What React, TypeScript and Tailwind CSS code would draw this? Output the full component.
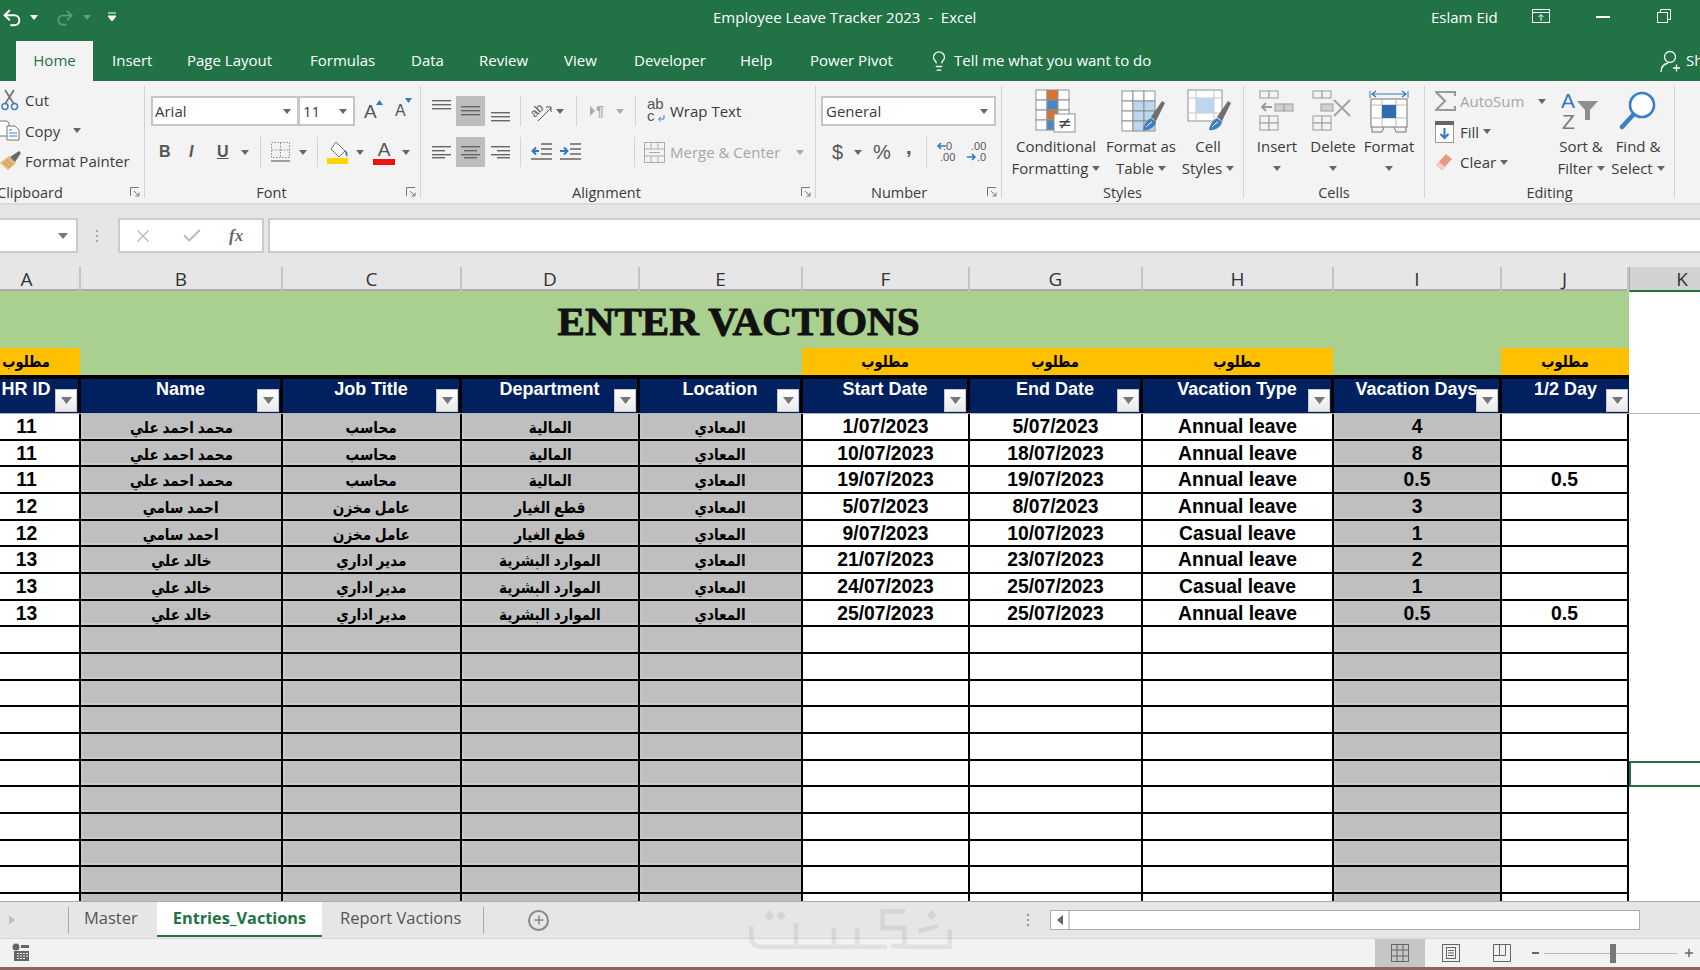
import { Check, Lightbulb, Plus, Redo2, Undo2, X } from "lucide-react";

const Caret = ({ className = "" }: { className?: string }) => (
  <svg width="8" height="5" viewBox="0 0 8 5" className={`shrink-0 ${className}`}>
    <path d="M0 0h8L4 5z" fill="#666" />
  </svg>
);

const Sep = ({ className = "" }: { className?: string }) => <div className={`h-[30px] w-px shrink-0 bg-[#d4d4d4] ${className}`} />;

const Lines = ({ rows, w = 19, h = 14 }: { rows: number[][]; w?: number; h?: number }) => (
  <svg width={w} height={h} viewBox={`0 0 ${w} ${h}`} className="shrink-0">
    {rows.map((r, i) => (
      <rect key={i} x={r[0]} y={r[2]} width={r[1] - r[0]} height="1.4" fill="#666" />
    ))}
  </svg>
);

const AlignBox = ({ children, active }: { children: React.ReactNode; active?: boolean }) => (
  <div className={`flex h-[30px] w-[29px] shrink-0 items-center justify-center ${active ? "bg-[#bdbdbd]" : ""}`}>{children}</div>
);

const Launcher = () => (
  <svg width="10" height="10" viewBox="0 0 10 10" className="absolute bottom-[1px] right-[4px]">
    <path d="M.5 9V.5H9M4 4l5 5M9 5.5V9H5.5" fill="none" stroke="#777" />
  </svg>
);

const Group = ({ label, className, labelClass = "justify-center", launcher, children }: { label: string; className: string; labelClass?: string; launcher?: boolean; children: React.ReactNode }) => (
  <div className={`relative flex h-[112px] shrink-0 flex-col border-r border-[#d2d2d2] ${className}`}>
    <div className="h-[100px] shrink-0">{children}</div>
    <div className={`flex h-[14px] items-center text-[14.5px] leading-none text-[#3b3b3b] ${labelClass}`}>{label}</div>
    {launcher && <Launcher />}
  </div>
);

const SmallBtn = ({ icon, label, caret, dim, caretClass }: { icon: React.ReactNode; label: string; caret?: boolean; dim?: boolean; caretClass?: string }) => (
  <div className="flex h-[30.5px] items-center">
    <div className="flex w-[25px] shrink-0 items-center">{icon}</div>
    <span className={`text-[15px] ${dim ? "text-[#a6a6a6]" : "text-[#3b3b3b]"}`}>{label}</span>
    {caret && <Caret className={caretClass} />}
  </div>
);

const BigBtn = ({ icon, lines, className, caretBelow }: { icon: React.ReactNode; lines: string[]; className: string; caretBelow?: boolean }) => (
  <div className={`flex shrink-0 flex-col items-center ${className}`}>
    <div className="flex h-[49px] items-center justify-center">{icon}</div>
    <span className="whitespace-nowrap text-[15px] leading-[22px] text-[#3b3b3b]">{lines[0]}</span>
    {caretBelow ? (
      <div className="flex h-[22px] items-center"><Caret /></div>
    ) : (
      <span className="flex items-center gap-[4px] whitespace-nowrap text-[15px] leading-[22px] text-[#3b3b3b]">
        {lines[1]}
        <Caret />
      </span>
    )}
  </div>
);

const CellGrid = ({ x, y, fill }: { x: number; y: number; fill: (c: number, r: number) => string }) => (
  <g>
    {[0, 1, 2, 3].map((r) =>
      [0, 1, 2].map((c) => <rect key={`${r}-${c}`} x={x + c * 11} y={y + r * 10} width="11" height="10" fill={fill(c, r)} stroke="#8f8f8f" />)
    )}
  </g>
);

const Brush = () => (
  <g>
    <path d="M30 28L41 12l3 2-9 18z" fill="#6f6f6f" />
    <path d="M22 41c1-6 4-10 8-12l5 4c-1 5-7 9-13 8z" fill="#3f7fc1" />
    <path d="M25 38c2-2 4-4 6-5" stroke="#fff" fill="none" />
  </g>
);

const CondIcon = () => (
  <svg width="42" height="44" viewBox="0 0 42 44">
    <CellGrid x={1} y={1} fill={(c, r) => (c === 1 && r === 0 ? "#d9732c" : c === 1 && r === 1 ? "#4a86c5" : c === 1 && r === 2 ? "#d9732c" : c === 1 && r === 3 ? "#4a86c5" : "#fff")} />
    <rect x="19" y="25" width="21" height="18" fill="#fff" stroke="#8f8f8f" />
    <text x="29.5" y="40" textAnchor="middle" fontSize="17" fontFamily="DejaVu Sans" fill="#444">≠</text>
  </svg>
);

const TableIcon = () => (
  <svg width="46" height="44" viewBox="0 0 46 44" className="ml-[6px]">
    <CellGrid x={1} y={2} fill={(c, r) => (r === 0 ? "#fff" : c === 0 ? "#fff" : "#bcd6ef")} />
    <Brush />
  </svg>
);

const StylesIcon = () => (
  <svg width="46" height="44" viewBox="0 0 46 44" className="ml-[4px]">
    <rect x="1" y="1" width="34" height="31" fill="#fff" stroke="#8f8f8f" />
    <path d="M1 9h34M1 24h34M9 1v31M27 1v31" stroke="#c4c4c4" />
    <rect x="9" y="9" width="18" height="15" fill="#bcd6ef" />
    <Brush />
  </svg>
);

const InsertIcon = () => (
  <svg width="36" height="42" viewBox="0 0 36 42" fill="#f3f3f3" stroke="#a8a8a8" strokeWidth="1.2">
    <rect x="1" y="1" width="9" height="7" /><rect x="10" y="1" width="9" height="7" />
    <rect x="16" y="14" width="9" height="7" fill="#cfcfcf" /><rect x="25" y="14" width="9" height="7" fill="#cfcfcf" />
    <rect x="1" y="26" width="9" height="7" /><rect x="10" y="26" width="9" height="7" /><rect x="1" y="33" width="9" height="7" /><rect x="10" y="33" width="9" height="7" />
    <path d="M13 17H3m4-4l-4 4 4 4" fill="none" stroke="#9a9a9a" strokeWidth="1.8" />
  </svg>
);

const DeleteIcon = () => (
  <svg width="42" height="42" viewBox="0 0 42 42" fill="#f3f3f3" stroke="#a8a8a8" strokeWidth="1.2">
    <rect x="1" y="1" width="9" height="7" /><rect x="10" y="1" width="9" height="7" />
    <rect x="9" y="14" width="12" height="7" fill="#cfcfcf" />
    <rect x="1" y="26" width="9" height="7" /><rect x="10" y="26" width="9" height="7" /><rect x="1" y="33" width="9" height="7" /><rect x="10" y="33" width="9" height="7" />
    <path d="M22 10l16 16M38 10L22 26" fill="none" stroke="#a3a3a3" strokeWidth="2" />
  </svg>
);

const FormatIcon = () => (
  <svg width="40" height="44" viewBox="0 0 40 44" fill="#fff" stroke="#777">
    <path d="M1 2v7M39 2v7" stroke="#2f78c4" />
    <path d="M3 5h34M7 2L3 5l4 3M33 2l4 3-4 3" fill="none" stroke="#2f78c4" strokeWidth="1.2" />
    <rect x="2" y="10" width="36" height="28" />
    <path d="M2 16h36M2 29h36M13 10v28M27 10v28" stroke="#b8b8b8" />
    <rect x="13" y="16" width="14" height="13" fill="#2f6db0" stroke="none" />
    <path d="M3 38v5h10l2-5M25 38l2 5h10v-5" fill="none" />
  </svg>
);

const Filter = () => (
  <div className="absolute bottom-[1px] right-[1px] flex h-[23px] w-[22px] items-center justify-center border border-[#c8c8c8] bg-gradient-to-b from-white to-[#e9e9e9]">
    <svg width="11" height="7" viewBox="0 0 11 7"><path d="M0 0h11L5.5 7z" fill="#777" /></svg>
  </div>
);

const gridCols = "grid grid-cols-[107px_202px_179px_178px_163px_167px_173px_191px_168px_127px_71px]";
const columns = ["A", "B", "C", "D", "E", "F", "G", "H", "I", "J", "K"];
const headers = ["HR ID", "Name", "Job Title", "Department", "Location", "Start Date", "End Date", "Vacation Type", "Vacation Days", "1/2 Day"];
const greyCols = [1, 2, 3, 4, 8];

const rows = [
  ["11", "محمد احمد علي", "محاسب", "المالية", "المعادي", "1/07/2023", "5/07/2023", "Annual leave", "4", ""],
  ["11", "محمد احمد علي", "محاسب", "المالية", "المعادي", "10/07/2023", "18/07/2023", "Annual leave", "8", ""],
  ["11", "محمد احمد علي", "محاسب", "المالية", "المعادي", "19/07/2023", "19/07/2023", "Annual leave", "0.5", "0.5"],
  ["12", "احمد سامي", "عامل مخزن", "قطع الغيار", "المعادي", "5/07/2023", "8/07/2023", "Annual leave", "3", ""],
  ["12", "احمد سامي", "عامل مخزن", "قطع الغيار", "المعادي", "9/07/2023", "10/07/2023", "Casual leave", "1", ""],
  ["13", "خالد علي", "مدير اداري", "الموارد البشرية", "المعادي", "21/07/2023", "23/07/2023", "Annual leave", "2", ""],
  ["13", "خالد علي", "مدير اداري", "الموارد البشرية", "المعادي", "24/07/2023", "25/07/2023", "Casual leave", "1", ""],
  ["13", "خالد علي", "مدير اداري", "الموارد البشرية", "المعادي", "25/07/2023", "25/07/2023", "Annual leave", "0.5", "0.5"],
  ...Array.from({ length: 11 }, () => Array(10).fill("")),
];

const required = "مطلوب";

export default function App() {
  return (
    <div className="relative flex h-[970px] w-[1700px] flex-col overflow-hidden bg-white font-['Open_Sans',sans-serif]">
      {/* title bar */}
      <div className="relative flex h-[41px] shrink-0 items-center bg-[#217346] text-white">
        <Undo2 size={22} strokeWidth={2.2} className="mb-[6px] ml-[1px] text-white" />
        <Caret className="mb-[6px] ml-[7px] [&>path]:fill-white" />
        <Redo2 size={20} strokeWidth={2} className="mb-[6px] ml-[17px] text-[#5f9f7d]" />
        <Caret className="mb-[6px] ml-[8px] [&>path]:fill-[#5f9f7d]" />
        <svg width="10" height="11" viewBox="0 0 10 11" className="mb-[6px] ml-[16px]"><path d="M1 1h8M1 4h8L5 9z" fill="#fff" stroke="#fff" /></svg>
        <span className="absolute left-[713px] top-[6px] whitespace-nowrap text-[15px] leading-[22px]">Employee Leave Tracker 2023&nbsp; -&nbsp; Excel</span>
        <span className="absolute left-[1431px] top-[6px] text-[15px] leading-[22px]">Eslam Eid</span>
        <svg width="18" height="15" viewBox="0 0 18 15" className="absolute left-[1532px] top-[9px]" fill="none" stroke="#fff"><rect x=".5" y=".5" width="17" height="13" /><path d="M1 3.5h16M9 12V6M6.5 8L9 5.500l2.500 2.500" /></svg>
        <div className="absolute left-[1596px] top-[16px] h-[2px] w-[14px] bg-white" />
        <svg width="14" height="14" viewBox="0 0 14 14" className="absolute left-[1657px] top-[9px]" fill="none" stroke="#fff"><rect x=".5" y="3.500" width="10" height="10" /><path d="M3.500 3V.5h10v10H11" /></svg>
      </div>

      {/* tabs */}
      <div className="relative flex h-[40px] shrink-0 items-center bg-[#217346] text-[15px] text-white [&>span]:pb-[2px]">
        <div className="ml-[16px] flex h-full w-[77px] items-center justify-center bg-[#f3f3f3] pb-[2px] text-[#217346]">Home</div>
        <span className="ml-[19px] w-[38px]">Insert</span>
        <span className="ml-[37px] w-[86px] whitespace-nowrap">Page Layout</span>
        <span className="ml-[37px] w-[65px]">Formulas</span>
        <span className="ml-[36px] w-[32px]">Data</span>
        <span className="ml-[36px] w-[49px]">Review</span>
        <span className="ml-[36px] w-[33px]">View</span>
        <span className="ml-[37px] w-[70px]">Developer</span>
        <span className="ml-[36px] w-[33px]">Help</span>
        <span className="ml-[37px] w-[83px] whitespace-nowrap">Power Pivot</span>
        <Lightbulb size={22} strokeWidth={1.4} className="ml-[35px]" />
        <span className="ml-[4px] whitespace-nowrap">Tell me what you want to do</span>
        <svg width="21" height="23" viewBox="0 0 21 23" fill="none" stroke="#fff" strokeWidth="1.3" className="absolute left-[1660px] top-[9px]">
          <circle cx="10" cy="7" r="5.500" /><path d="M1 22c0-5 3-8 7-9M13 18h7M16.500 14.500v7" />
        </svg>
        <span className="absolute left-[1686px] top-[8px]">Share</span>
      </div>

      {/* ribbon */}
      <div className="flex h-[124px] shrink-0 items-start border-b-2 border-[#dadada] bg-[#f3f3f3] pt-[5px]">
        <Group label="Clipboard" className="w-[145px]" labelClass="pl-0 -ml-[3px]" launcher>
          <div className="-mt-px">
            <SmallBtn label="Cut" icon={
              <svg width="20" height="22" viewBox="0 0 20 22" fill="none"><path d="M5 1l9 14M14 1L5 15" stroke="#6d6d6d" strokeWidth="1.6" /><circle cx="5" cy="17.500" r="3" stroke="#3f7fc1" strokeWidth="1.5" /><circle cx="14.500" cy="17.500" r="3" stroke="#3f7fc1" strokeWidth="1.5" /></svg>
            } />
            <SmallBtn label="Copy" caret caretClass="ml-[13px]" icon={
              <svg width="20" height="21" viewBox="0 0 20 21"><path d="M-1 1h8l2 2v13H-1z" fill="#fff" stroke="#777" /><path d="M7 6h8l4 4v10H7z" fill="#fff" stroke="#777" /><path d="M9 10h3M9 13h8M9 16h8" stroke="#3f7fc1" /></svg>
            } />
            <SmallBtn label="Format Painter" icon={
              <svg width="22" height="22" viewBox="0 0 22 22"><path d="M0 13l9-7 7 7-8 7z" fill="#e3b877" /><path d="M10 7l9-6 2 2-6 9z" fill="#6a6a6a" /><path d="M4 12l6 6M7 10l5 6" stroke="#c68f45" /></svg>
            } />
          </div>
        </Group>

        <Group label="Font" className="w-[276px]" labelClass="justify-center pr-[22px]" launcher>
          <div className="flex flex-col gap-[11px] pl-[6px] pt-[10px]">
            <div className="flex h-[30px] items-center">
              <div className="flex h-full w-[148px] items-center justify-between border-2 border-[#c6c6c6] bg-white pl-[2px] pr-[6px] text-[15px] text-[#3b3b3b]">Arial<Caret /></div>
              <div className="-ml-px flex h-full w-[57px] items-center justify-between border-2 border-[#c6c6c6] bg-white pl-[3px] pr-[6px] text-[15px] text-[#3b3b3b]">11<Caret /></div>
              <div className="relative ml-[9px] w-[18px] font-['Liberation_Sans'] text-[19px] leading-none text-[#555]">A<svg width="7" height="5" viewBox="0 0 7 5" className="absolute -top-[2px] left-[12px]"><path d="M0 5h7L3.500 0z" fill="#2f78c4" /></svg></div>
              <div className="relative ml-[13px] w-[15px] font-['Liberation_Sans'] text-[16px] leading-none text-[#555]">A<svg width="7" height="5" viewBox="0 0 7 5" className="absolute -top-[5px] left-[10px]"><path d="M0 0h7L3.500 5z" fill="#2f78c4" /></svg></div>
            </div>
            <div className="flex h-[30px] items-center font-['Liberation_Sans'] text-[16px] text-[#555]">
              <span className="ml-[8px] w-[12px] font-bold">B</span>
              <span className="ml-[18px] w-[10px] font-bold italic">I</span>
              <span className="ml-[18px] w-[13px] font-bold underline">U</span>
              <Caret className="ml-[11px]" />
              <Sep className="ml-[11px]" />
              <svg width="19" height="20" viewBox="0 0 19 20" className="ml-[10px] shrink-0" fill="none" stroke="#8a8a8a" strokeDasharray="1.500 1.500"><rect x=".5" y=".5" width="18" height="15" /><path d="M9.500 1v14M1 8h17" /><path d="M0 19h19" strokeDasharray="none" strokeWidth="1.600" /></svg>
              <Caret className="ml-[9px]" />
              <Sep className="ml-[10px]" />
              <svg width="22" height="23" viewBox="0 0 22 23" className="ml-[9px] shrink-0"><path d="M9 1l9 9-6 6-8-8z" fill="#fff" stroke="#777" /><path d="M18 9c3 2 3 5 2 7-1-2-2-3-2-7z" fill="#3f7fc1" /><rect y="17" width="21" height="6" fill="#ffd500" /></svg>
              <Caret className="ml-[7px]" />
              <div className="ml-[9px] flex w-[22px] flex-col items-center"><span className="text-[19px] leading-[19px]">A</span><div className="h-[6px] w-full bg-[#ee1111]" /></div>
              <Caret className="ml-[7px]" />
            </div>
          </div>
        </Group>

        <Group label="Alignment" className="w-[395px]" labelClass="pl-[151px]" launcher>
          <div className="flex flex-col gap-[11px] pl-[11px] pt-[10px]">
            <div className="flex h-[30px] items-center">
              <div className="mb-[10px]"><Lines rows={[[0, 19, 1], [0, 19, 5], [0, 19, 9]]} /></div>
              <div className="ml-[5px]"><AlignBox active><Lines rows={[[0, 19, 2], [0, 19, 6], [0, 19, 10]]} /></AlignBox></div>
              <div className="ml-[6px] mt-[10px]"><Lines rows={[[0, 19, 3], [0, 19, 7], [0, 19, 11]]} /></div>
              <Sep className="ml-[10px]" />
              <svg width="22" height="22" viewBox="0 0 22 22" className="ml-[10px] shrink-0 overflow-visible"><text x="0" y="13" transform="rotate(-45 8 11)" fontFamily="Liberation Sans" fontSize="12" fill="#555">ab</text><path d="M7 21L20 8M15 7h5v5" stroke="#555" fill="none" /></svg>
              <Caret className="ml-[3px]" />
              <Sep className="ml-[12px]" />
              <svg width="17" height="14" viewBox="0 0 17 14" className="ml-[13px] shrink-0"><path d="M0 2l5 5-5 5z" fill="#aaa" /><text x="6" y="12" fontFamily="Liberation Sans" fontWeight="bold" fontSize="14" fill="#aaa">¶</text></svg>
              <Caret className="ml-[9px] [&>path]:fill-[#aaa]" />
              <Sep className="ml-[11px]" />
              <div className="relative ml-[11px] h-[26px] w-[18px] shrink-0 font-['Liberation_Sans'] text-[15px] leading-[12px] text-[#555]">
                <span className="block">ab</span>
                <span className="block">c</span>
                <svg width="8" height="8" viewBox="0 0 8 8" className="absolute bottom-[1px] right-0" fill="none" stroke="#3f7fc1"><path d="M7 0v4H2M4 2L1.500 4 4 6.500" /></svg>
              </div>
              <span className="ml-[5px] whitespace-nowrap text-[15px] text-[#3b3b3b]">Wrap Text</span>
            </div>
            <div className="flex h-[30px] items-center">
              <Lines rows={[[0, 19, 1], [0, 13, 5], [0, 19, 9], [0, 13, 12]]} />
              <div className="ml-[5px]"><AlignBox active><Lines rows={[[0, 19, 1], [3, 16, 5], [0, 19, 9], [3, 16, 12]]} /></AlignBox></div>
              <div className="ml-[6px]"><Lines rows={[[0, 19, 1], [6, 19, 5], [0, 19, 9], [6, 19, 12]]} /></div>
              <Sep className="ml-[10px]" />
              <svg width="21" height="18" viewBox="0 0 21 18" className="ml-[10px] shrink-0"><path d="M10 1h11M10 6h11M10 11h11M0 16h21" stroke="#666" strokeWidth="1.300" /><path d="M8 8H2M5 4.500L1.500 8 5 11.500" fill="none" stroke="#2f78c4" strokeWidth="2" /></svg>
              <svg width="21" height="18" viewBox="0 0 21 18" className="ml-[8px] shrink-0"><path d="M10 1h11M10 6h11M10 11h11M0 16h21" stroke="#666" strokeWidth="1.300" /><path d="M0 8h7M4 4.500L7.500 8 4 11.500" fill="none" stroke="#2f78c4" strokeWidth="2" /></svg>
              <Sep className="ml-[53px]" />
              <svg width="21" height="21" viewBox="0 0 21 21" className="ml-[9px] shrink-0" fill="none" stroke="#ababab"><rect x=".5" y=".5" width="20" height="20" /><path d="M1 7h19M1 14h19M7 1v6M14 1v6M7 14v6M14 14v6M5 10.500h11" /></svg>
              <span className="ml-[5px] w-[114px] whitespace-nowrap text-[15px] text-[#a6a6a6]">Merge &amp; Center</span>
              <Caret className="ml-[12px] [&>path]:fill-[#aaa]" />
            </div>
          </div>
        </Group>

        <Group label="Number" className="w-[186px]" labelClass="pl-[55px]" launcher>
          <div className="flex flex-col gap-[11px] pl-[5px] pt-[10px]">
            <div className="flex h-[30px] w-[175px] items-center justify-between border-2 border-[#c6c6c6] bg-white pl-[3px] pr-[6px] text-[15px] text-[#3b3b3b]">General<Caret /></div>
            <div className="flex h-[30px] items-center font-['Liberation_Sans'] text-[20px] text-[#555]">
              <span className="ml-[11px] w-[12px]">$</span>
              <Caret className="ml-[10px]" />
              <span className="ml-[11px] w-[18px]">%</span>
              <span className="-mt-[10px] ml-[15px] w-[8px] font-bold">,</span>
              <Sep className="ml-[12px]" />
              <svg width="21" height="22" viewBox="0 0 21 22" className="ml-[10px] shrink-0"><text x="6" y="9" fontSize="11" fontFamily="Liberation Sans" fill="#555">.0</text><text x="3" y="20" fontSize="11" fontFamily="Liberation Sans" fill="#555">.00</text><path d="M9 5H1M4 2L1 5l3 3" fill="none" stroke="#2f78c4" strokeWidth="1.500" /></svg>
              <svg width="21" height="22" viewBox="0 0 21 22" className="ml-[8px] shrink-0"><text x="5" y="9" fontSize="11" fontFamily="Liberation Sans" fill="#555">.00</text><text x="11" y="20" fontSize="11" fontFamily="Liberation Sans" fill="#555">.0</text><path d="M1 16h8M6 13l3 3-3 3" fill="none" stroke="#2f78c4" strokeWidth="1.500" /></svg>
            </div>
          </div>
        </Group>

        <Group label="Styles" className="w-[242px]">
          <div className="flex pl-[8px]">
            <BigBtn icon={<CondIcon />} lines={["Conditional", "Formatting"]} className="w-[92px]" />
            <BigBtn icon={<TableIcon />} lines={["Format as", "Table"]} className="w-[78px]" />
            <BigBtn icon={<StylesIcon />} lines={["Cell", "Styles"]} className="w-[56px]" />
          </div>
        </Group>

        <Group label="Cells" className="w-[181px]">
          <div className="flex pl-[5px]">
            <BigBtn icon={<InsertIcon />} lines={["Insert"]} caretBelow className="w-[56px]" />
            <BigBtn icon={<DeleteIcon />} lines={["Delete"]} caretBelow className="w-[56px]" />
            <BigBtn icon={<FormatIcon />} lines={["Format"]} caretBelow className="w-[56px]" />
          </div>
        </Group>

        <Group label="Editing" className="w-[250px]">
          <div className="flex pl-[10px]">
            <div className="w-[119px] shrink-0">
              <SmallBtn label="AutoSum" dim caret caretClass="ml-[14px]" icon={<svg width="21" height="21" viewBox="0 0 21 21"><path d="M20 5V1H1l9 9-9 9h19v-4" fill="none" stroke="#9a9a9a" strokeWidth="2.200" /></svg>} />
              <SmallBtn label="Fill" caret caretClass="ml-[4px]" icon={<svg width="20" height="22" viewBox="0 0 20 22"><rect x=".5" y=".5" width="18" height="21" fill="#fff" stroke="#999" /><rect width="19" height="4" fill="#666" /><path d="M9.500 7v10M5.500 13l4 4 4-4" fill="none" stroke="#2f78c4" strokeWidth="2" /></svg>} />
              <SmallBtn label="Clear" caret caretClass="ml-[4px]" icon={<svg width="18" height="18" viewBox="0 0 18 18"><path d="M1 12L11 1l6 5-10 11z" fill="#e79a86" /><path d="M1 12l6 5 3-3-6-5z" fill="#f2cfc4" /></svg>} />
            </div>
            <BigBtn icon={
              <svg width="40" height="42" viewBox="0 0 40 42"><text x="0" y="18" fontFamily="Liberation Sans" fontSize="21" fill="#2f78c4">A</text><text x="1" y="39" fontFamily="Liberation Sans" fontSize="21" fill="#7a7a7a">Z</text><path d="M16 11h21l-8 9v10h-5V20z" fill="#8e8e8e" /></svg>
            } lines={["Sort &", "Filter"]} className="w-[54px]" />
            <BigBtn icon={
              <svg width="38" height="42" viewBox="0 0 38 42" fill="none"><circle cx="23" cy="15" r="12" fill="#fff" stroke="#3b7fc4" strokeWidth="2.600" /><path d="M14 25L3 37" stroke="#3b7fc4" strokeWidth="4.500" strokeLinecap="round" /></svg>
            } lines={["Find &", "Select"]} className="ml-[1px] w-[58px]" />
          </div>
        </Group>
      </div>

      {/* formula bar */}
      <div className="flex h-[62px] shrink-0 items-start bg-[#e6e6e6] pt-[13px]">
        <div className="flex h-[35px] w-[78px] items-center justify-end border-2 border-l-0 border-[#cbcbcb] bg-white pr-[8px]"><svg width="10" height="6" viewBox="0 0 10 6"><path d="M0 0h10L5 6z" fill="#777" /></svg></div>
        <div className="ml-[18px] flex h-[35px] flex-col justify-center gap-[3px]">
          <div className="h-[2px] w-[2px] bg-[#aaa]" /><div className="h-[2px] w-[2px] bg-[#aaa]" /><div className="h-[2px] w-[2px] bg-[#aaa]" />
        </div>
        <div className="ml-[20px] flex h-[35px] w-[146px] items-center border-2 border-[#cbcbcb] bg-white">
          <X size={20} strokeWidth={1.8} className="ml-[13px] text-[#bdbdbd]" />
          <Check size={22} strokeWidth={2.4} className="ml-[28px] text-[#bdbdbd]" />
          <span className="ml-[26px] font-['Liberation_Serif'] text-[17px] font-bold italic text-[#666]">fx</span>
        </div>
        <div className="ml-[4px] h-[35px] flex-1 border-y-2 border-l-2 border-[#cbcbcb] bg-white" />
      </div>

      {/* sheet */}
      <div className="flex min-h-0 flex-1 flex-col">
        <div className={`${gridCols} -ml-[26px] h-[24px] shrink-0 border-b-2 border-[#ababab] bg-[#e6e6e6] text-[19px] leading-[24px] text-[#333]`}>
          {columns.map((c) => (
            <div key={c} className={`text-center ${c === "K" ? "h-[25px] border-b-2 border-l border-[#ababab] border-b-[#217346] bg-[#d2d2d2] pl-[34px]" : "border-r-2 border-[#c4c4c4]"}`}>{c}</div>
          ))}
        </div>
        <div className="min-h-0 flex-1 overflow-hidden font-['Liberation_Sans','DejaVu_Sans',sans-serif] text-black">
          <div className={`${gridCols} -ml-[26px]`}>
            <div className="col-span-10 flex h-[57px] items-center justify-center bg-[#a9d08e] pr-[126px] pt-[3px] font-['Liberation_Serif'] text-[41px] font-bold leading-none text-[#111] [-webkit-text-stroke:1px_#111]">
              ENTER VACTIONS
            </div>
            <div />
          </div>
          <div className={`${gridCols} -ml-[27px] h-[27px] text-[16px] font-bold leading-[27px]`}>
            {[true, false, false, false, false, true, true, true, false, true].map((y, i) => (
              <div key={i} className={`text-center ${y ? "bg-[#ffc000]" : "bg-[#a9d08e]"} ${i === 9 ? "-mr-px" : ""}`}>
                {y && <span className="inline-block scale-x-[.82]">{required}</span>}
              </div>
            ))}
            <div />
          </div>
          <div className={`${gridCols} -ml-[26px] h-[39px] border-b border-[#b5b5b5]`}>
            {headers.map((h) => (
              <div key={h} className="relative border-r-[3px] border-t-4 border-black bg-[#002060] text-center text-[18px] font-bold leading-[20px] text-white [&:nth-child(10)]:border-r-0">
                {h}
                <Filter />
              </div>
            ))}
            <div className="bg-white" />
          </div>
          {rows.map((r, i) => (
            <div key={i} className={`${gridCols} -ml-[26px] h-[26.67px]`}>
              {r.map((v: string, j: number) => (
                <div
                  key={j}
                  className={`truncate border-b-2 border-r-2 border-black text-center text-[19.3px] font-bold leading-[26px] ${greyCols.includes(j) ? "bg-[#bfbfbf] shadow-[inset_0_-2px_0_#cacaca,inset_2px_0_0_#c6c6c6]" : "bg-white"}`}
                >
                  {[1, 2, 3, 4].includes(j) ? <span className="inline-block scale-x-[.85] text-[16px]">{v}</span> : v}
                </div>
              ))}
              <div className={i === 13 ? "relative z-10 border-2 border-r-0 border-[#217346] bg-white" : "bg-white"} />
            </div>
          ))}
        </div>
      </div>

      {/* sheet tabs */}
      <div className="flex h-[37px] shrink-0 items-center border-t border-[#ababab] bg-[#e6e6e6] text-[16.5px] text-[#555]">
        <svg width="6" height="10" viewBox="0 0 6 10" className="ml-[9px]"><path d="M0 0l6 5-6 5z" fill="#c0c0c0" /></svg>
        <div className="ml-[53px] h-[27px] w-px bg-[#ababab]" />
        <span className="-mt-[3px] ml-[15px] w-[55px]">Master</span>
        <div className="-mt-[2px] ml-[18px] flex h-[35px] w-[165px] items-center justify-center border-b-2 border-[#217346] bg-white text-[16.3px] font-bold text-[#217346]">Entries_Vactions</div>
        <span className="-mt-[3px] ml-[18px] w-[124px] whitespace-nowrap">Report Vactions</span>
        <div className="ml-[19px] h-[27px] w-px bg-[#ababab]" />
        <div className="ml-[44px] flex h-[21px] w-[21px] items-center justify-center rounded-full border-2 border-[#888]"><Plus size={14} strokeWidth={2.5} className="text-[#888]" /></div>
        <div className="ml-[478px] flex flex-col gap-[3px]">
          <div className="h-[2px] w-[2px] bg-[#999]" /><div className="h-[2px] w-[2px] bg-[#999]" /><div className="h-[2px] w-[2px] bg-[#999]" />
        </div>
        <div className="ml-[21px] flex h-[20px] w-[590px] items-center border border-[#ababab] bg-white">
          <div className="flex h-full w-[19px] items-center justify-center border-r-2 border-[#d0d0d0]"><svg width="6" height="10" viewBox="0 0 6 10"><path d="M6 0L0 5l6 5z" fill="#666" /></svg></div>
        </div>
      </div>

      {/* status bar */}
      <div className="flex h-[29px] shrink-0 items-stretch border-t border-[#d8d8d8] bg-[#f2f2f2]">
        <svg width="18" height="19" viewBox="0 0 18 19" className="ml-[12px] mt-[4px]"><circle cx="4" cy="4" r="3.500" fill="#666" /><path d="M9 2h8v3H9z" fill="#666" /><rect x="2" y="8" width="15" height="10" fill="#666" /><path d="M5 10.500h2M8 10.500h2M11 10.500h2M14 10.500h2M5 13h2M8 13h2M11 13h2M14 13h2M5 15.500h2M8 15.500h2M11 15.500h2" stroke="#f2f2f2" /></svg>
        <div className="ml-[1345px] flex w-[50px] items-center justify-center bg-[#c6c6c6]">
          <svg width="18" height="18" viewBox="0 0 18 18" fill="none" stroke="#666"><rect x=".5" y=".5" width="17" height="17" /><path d="M6 1v16M12 1v16M1 6h16M1 12h16" /></svg>
        </div>
        <div className="flex w-[51px] items-center justify-center">
          <svg width="18" height="18" viewBox="0 0 18 18" fill="none" stroke="#666"><rect x=".5" y=".5" width="17" height="17" /><rect x="4.500" y="3.500" width="9" height="11" /><path d="M6 6.500h6M6 9h6M6 11.500h6" /></svg>
        </div>
        <div className="flex w-[51px] items-center justify-center">
          <svg width="18" height="18" viewBox="0 0 18 18" fill="none" stroke="#666"><path d="M.5.500h17v17H.5zM.5 11.500h12V.5M6.500 1v10" /></svg>
        </div>
        <div className="ml-[5px] flex items-center">
          <div className="h-[2px] w-[7px] bg-[#666]" />
          <div className="relative ml-[5px] h-px w-[133px] bg-[#b5b5b5]">
            <div className="absolute -top-[9px] left-[66px] h-[19px] w-[6px] bg-[#777]" />
          </div>
          <Plus size={12} strokeWidth={3} className="ml-[6px] text-[#666]" />
        </div>
      </div>

      {/* brown strip of the window behind */}
      <div className="h-[3px] shrink-0 bg-[#8b675b]" />

      {/* watermark logo */}
      <svg width="207" height="43" viewBox="440 145 620 130" fill="none" stroke="#000" strokeOpacity=".065" strokeWidth="14" className="absolute left-[747px] top-[908px]">
        <path d="M450 200v32c0 20 12 30 32 30h378M585 190v65M700 205v50M770 205v50" />
        <path d="M915 155h-68v50h66v55h-40M890 262h160v-52M955 215l60-15" />
        <path d="M505 152l15 16-15 16-15-16zM540 152l15 16-15 16-15-16zM995 150l15 16-15 16-15-16z" fill="#000" fillOpacity=".065" stroke="none" />
      </svg>
    </div>
  );
}
